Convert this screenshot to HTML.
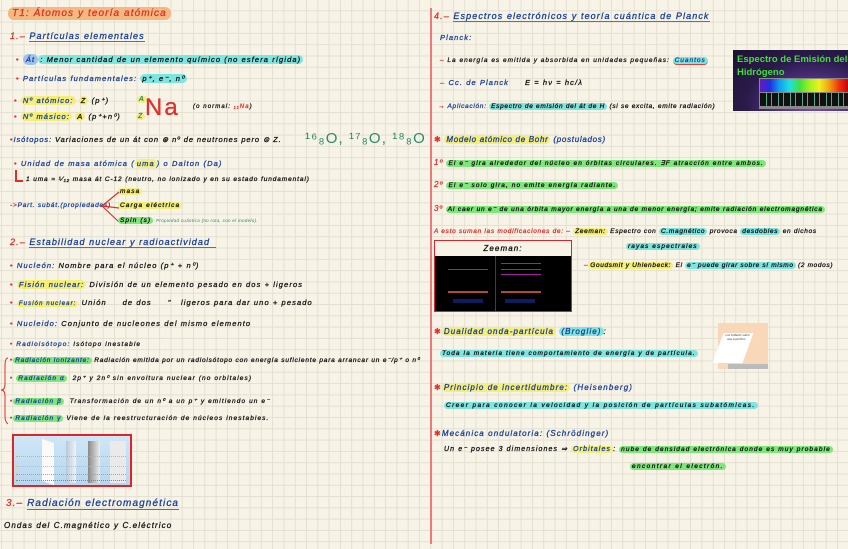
<!DOCTYPE html>
<html><head><meta charset="utf-8"><style>
html,body{margin:0;padding:0}
body{width:848px;height:549px;position:relative;overflow:hidden;background-color:#f7f4e7;
background-image:linear-gradient(to right,#e3e0d1 1px,transparent 1px),linear-gradient(to bottom,#e3e0d1 1px,transparent 1px);
background-size:11.3px 11.3px;background-position:1px -1px;
font-family:"Liberation Sans",sans-serif;font-style:italic;font-size:7.5px;color:#111;letter-spacing:1.1px;-webkit-text-stroke:0.3px currentColor}
.t{position:absolute;white-space:nowrap;line-height:10px}
.b{color:#1a3f99}.r{color:#e0302a}.g{color:#2a8a6a}.k{color:#111}
.hc{background:#7ee6e0;border-radius:5px;padding:0 2px}
.hy{background:#f4ee7a;border-radius:5px;padding:0 2px}
.hg{background:#7ee67a;border-radius:5px;padding:0 2px}
.ho{background:#f5b880;border-radius:6px;padding:1px 4px}
.u{border-bottom:1.5px solid #e0403a}
.dot{color:#e0302a;font-style:normal}
</style></head><body>
<div style="position:absolute;left:430px;top:8px;width:1.5px;height:536px;background:#ec7a7a"></div>

<!-- LEFT -->
<div class="t r" style="left:8px;top:9px;font-size:10px"><span class="ho">T1: Átomos y teoría atómica</span></div>
<div class="t r" style="left:10px;top:31px;font-size:9px">1.– <span class="b u">Partículas elementales</span></div>
<div class="t" style="left:16px;top:55px"><span class="dot">•</span> <span style="background:#9fc2ec;border-radius:6px;padding:1px 3px" class="b">Át</span><span class="hc">: Menor cantidad de un elemento químico (no esfera rígida)</span></div>
<div class="t b" style="left:16px;top:74px"><span class="dot">•</span> Partículas fundamentales: <span class="hc k">p⁺, e⁻, n⁰</span></div>
<div class="t" style="left:14px;top:96px"><span class="dot">•</span> <span class="hy b">Nº atómico:</span> <span class="hy">Z</span> (p⁺)</div>
<div class="t" style="left:14px;top:112px"><span class="dot">•</span> <span class="hy b">Nº másico:</span> <span class="hy">A</span> (p⁺+n⁰)</div>
<div class="t g" style="left:137px;top:95px;font-size:7px"><span class="hy">A</span></div>
<div class="t g" style="left:136px;top:112px;font-size:7px"><span class="hy">Z</span></div>
<div class="t r" style="left:145px;top:96px;font-size:24px;font-style:normal;line-height:24px;letter-spacing:2px">Na</div>
<div class="t k" style="left:193px;top:102px;font-size:6px">(o normal: <span class="r">₁₁Na</span>)</div>
<div class="t k" style="left:10px;top:135px;letter-spacing:0.9px"><span class="dot">•</span><span class="b">Isótopos:</span> Variaciones de un át con ⊛ nº de neutrones pero ⊜ Z.</div>
<div class="t g" style="left:305px;top:131px;font-size:15px;line-height:16px;font-style:normal;-webkit-text-stroke:0">¹⁶₈O, ¹⁷₈O, ¹⁸₈O</div>
<div class="t b" style="left:14px;top:159px"><span class="dot">•</span> Unidad de masa atómica (<span class="hy">uma</span>) o Dalton (Da)</div>
<div style="position:absolute;left:15px;top:170px;width:1.5px;height:10px;background:#e0302a"></div>
<div style="position:absolute;left:15px;top:180px;width:8px;height:1.5px;background:#e0302a"></div>
<div class="t k" style="left:26px;top:175px;font-size:6.5px;letter-spacing:0.9px">1 uma = ¹⁄₁₂ masa át C-12 (neutro, no ionizado y en su estado fundamental)</div>
<div class="t k" style="left:118px;top:187px;font-size:6.5px"><span class="hy">masa</span></div>
<div class="t" style="left:10px;top:201px;font-size:6.5px;letter-spacing:0.8px"><span class="r">-&gt;</span><span class="b">Part. subát.(propiedades)</span></div>
<svg style="position:absolute;left:99px;top:190px" width="22" height="36"><path d="M20 2 L3 16 L20 18 M3 16 L20 32" stroke="#e0302a" stroke-width="1.2" fill="none"/></svg>
<div class="t k" style="left:118px;top:201px;font-size:6.5px"><span class="hy">Carga eléctrica</span></div>
<div class="t k" style="left:118px;top:216px;font-size:6.5px"><span class="hg">Spin (s)</span> <span class="g" style="font-size:4.5px;letter-spacing:.3px;-webkit-text-stroke:0">Propiedad cuántica (no rota, con el modelo).</span></div>
<div class="t r" style="left:10px;top:237px;font-size:9px">2.– <span class="b u" style="padding-right:6px">Estabilidad nuclear y radioactividad</span></div>
<div class="t k" style="left:10px;top:261px"><span class="dot">•</span> <span class="b">Nucleón:</span> Nombre para el núcleo (p⁺ + n⁰)</div>
<div class="t k" style="left:10px;top:280px"><span class="dot">•</span> <span class="hy b">Fisión nuclear:</span> División de un elemento pesado en dos + ligeros</div>
<div class="t k" style="left:10px;top:298px"><span class="dot">•</span> <span class="hy b" style="font-size:6px">Fusión nuclear:</span> Unión &nbsp; &nbsp; de dos &nbsp; &nbsp; " &nbsp; ligeros para dar uno + pesado</div>
<div class="t k" style="left:10px;top:319px"><span class="dot">•</span> <span class="b">Nucleido:</span> Conjunto de nucleones del mismo elemento</div>
<div class="t k" style="left:10px;top:340px;font-size:6.5px"><span class="dot">•</span> <span class="b">Radioisótopo:</span> Isótopo inestable</div>
<svg style="position:absolute;left:0px;top:356px" width="12" height="70"><path d="M8 2 Q5 2 5 10 L5 28 Q5 34 1 34 Q5 34 5 40 L5 60 Q5 66 8 68" stroke="#e0302a" stroke-width="1" fill="none"/></svg>
<div class="t k" style="left:10px;top:356px;font-size:6.5px;letter-spacing:0.8px"><span class="dot">•</span><span class="hg b">Radiación ionizante:</span> Radiación emitida por un radioisótopo con energía suficiente para arrancar un e⁻/p⁺ o n⁰</div>
<div class="t k" style="left:10px;top:374px;font-size:6.5px"><span class="dot">•</span> <span class="hg b">Radiación α</span> &nbsp;2p⁺ y 2n⁰ sin envoltura nuclear (no orbitales)</div>
<div class="t k" style="left:10px;top:397px;font-size:6.5px"><span class="dot">•</span><span class="hg b">Radiación β</span> &nbsp;Transformación de un n⁰ a un p⁺ y emitiendo un e⁻</div>
<div class="t k" style="left:10px;top:414px;font-size:6.5px"><span class="dot">•</span><span class="hg b">Radiación γ</span> Viene de la reestructuración de núcleos inestables.</div>
<div style="position:absolute;left:12px;top:434px;width:116px;height:49px;border:2px solid #d8262a;background:linear-gradient(#cfe6f6,#b8d6ee)">
  <div style="position:absolute;left:28px;top:5px;width:12px;height:42px;background:#fafafa;transform:skewY(20deg)"></div>
  <div style="position:absolute;left:52px;top:5px;width:10px;height:42px;background:linear-gradient(90deg,#b8c8d8,#f0f4f8)"></div>
  <div style="position:absolute;left:74px;top:5px;width:12px;height:42px;background:linear-gradient(90deg,#888,#eee)"></div>
  <div style="position:absolute;left:96px;top:5px;width:16px;height:42px;background:#eaeaea"></div>
  <div style="position:absolute;left:2px;top:20px;width:110px;height:1px;border-top:1px dotted #d8b060"></div>
  <div style="position:absolute;left:2px;top:30px;width:110px;height:1px;border-top:1px dotted #e8c040"></div>
  <div style="position:absolute;left:2px;top:38px;width:110px;height:1px;border-top:1px dotted #e89040"></div>
  <div style="position:absolute;left:2px;top:44px;width:110px;height:1px;border-top:1px dotted #60a060"></div>
</div>
<div class="t r" style="left:6px;top:499px;font-size:10px">3.– <span class="b u">Radiación electromagnética</span></div>
<div class="t k" style="left:4px;top:521px;font-size:8px">Ondas del C.magnético y C.eléctrico</div>

<!-- RIGHT -->
<div class="t r" style="left:434px;top:11px;font-size:9px">4.– <span class="b u">Espectros electrónicos y teoría cuántica de Planck</span></div>
<div class="t b" style="left:440px;top:33px">Planck:</div>
<div class="t k" style="left:440px;top:56px;font-size:6.5px;letter-spacing:1px"><span class="r">–</span> La energía es emitida y absorbida en unidades pequeñas: <span class="hc b u">Cuantos</span></div>
<div class="t b" style="left:440px;top:78px"><span class="r">–</span> Cc. de Planck &nbsp; &nbsp; <span class="k">E = hν = hc/λ</span></div>
<div class="t k" style="left:438px;top:102px;font-size:6.5px;letter-spacing:0.7px"><span class="r">→</span> <span class="b">Aplicación:</span> <span class="hc">Espectro de emisión del át de H</span> (si se excita, emite radiación)</div>
<div style="position:absolute;left:733px;top:50px;width:115px;height:61px;background:radial-gradient(ellipse at 70% 90%,#7a4ac0,#2a1a4a 60%,#1c1230);overflow:hidden;-webkit-text-stroke:0">
  <div style="position:absolute;left:4px;top:3px;color:#3fe03a;font-style:normal;font-weight:bold;font-size:9.5px;letter-spacing:0;line-height:13px;white-space:nowrap">Espectro de Emisión del<br>Hidrógeno</div>
  <div style="position:absolute;left:26px;top:28px;width:89px;height:29px;background:#888;padding:1px">
    <div style="height:13px;background:linear-gradient(90deg,#6a18c0,#2030e0,#10a0f0,#20e0e0,#40e040,#a0f020,#f0f020,#f0a010,#f03010,#c00010)"></div>
    <div style="height:13px;margin-top:1px;background:#111 repeating-linear-gradient(90deg,transparent 0 6px,#5a8 6px 7px,transparent 7px 11px,#a84 11px 12px)"></div>
  </div>
</div>
<div class="t k" style="left:434px;top:135px;font-size:8px;letter-spacing:0.7px"><span class="r" style="font-style:normal">✱</span> <span class="hy b">Modelo atómico de Bohr</span> <span class="b">(postulados)</span></div>
<div class="t k" style="left:434px;top:158px;font-size:6.5px;letter-spacing:1.1px"><span class="r" style="font-size:8px">1º</span> <span class="hg">El e⁻ gira alrededor del núcleo en órbitas circulares. ∃F atracción entre ambos.</span></div>
<div class="t k" style="left:434px;top:180px;font-size:6.5px"><span class="r" style="font-size:8px">2º</span> <span class="hg">El e⁻ solo gira, no emite energía radiante.</span></div>
<div class="t k" style="left:434px;top:204px;font-size:6.5px;letter-spacing:0.85px"><span class="r" style="font-size:8px">3º</span> <span class="hg">Al caer un e⁻ de una órbita mayor energía a una de menor energía; emite radiación electromagnética</span></div>
<div class="t k" style="left:434px;top:227px;font-size:6.5px;letter-spacing:0.7px"><span class="r">A esto suman las modificaciones de: –</span> <span class="hy">Zeeman:</span> Espectro con <span class="hc">C.magnético</span> provoca <span class="hc">desdobles</span> en dichos</div>
<div class="t k" style="left:626px;top:242px;font-size:6.5px"><span class="hc">rayas espectrales</span></div>
<div class="t k" style="left:584px;top:261px;font-size:6.5px;letter-spacing:0.65px"><span class="r">–</span><span class="hy">Goudsmit y Uhlenbeck:</span> El <span class="hc">e⁻ puede girar sobre sí mismo</span> (2 modos)</div>
<div style="position:absolute;left:434px;top:240px;width:136px;height:70px;border:1.5px solid #d8262a;background:#000">
  <div style="height:15px;background:#f7f4e7;text-align:center;font-size:8px;line-height:15px">Zeeman:</div>
  <div style="position:absolute;left:60px;top:15px;width:1px;height:55px;background:#2030e0"></div>
  <div style="position:absolute;left:13px;top:28px;width:40px;height:1px;background:#a020a0"></div>
  <div style="position:absolute;left:66px;top:22px;width:40px;height:1px;background:#a020a0"></div>
  <div style="position:absolute;left:66px;top:28px;width:40px;height:1px;background:#a020a0"></div>
  <div style="position:absolute;left:66px;top:33px;width:40px;height:1px;background:#a020a0"></div>
  <div style="position:absolute;left:13px;top:50px;width:40px;height:1.5px;background:#b05020"></div>
  <div style="position:absolute;left:66px;top:50px;width:40px;height:1.5px;background:#b05020"></div>
  <div style="position:absolute;left:18px;top:58px;width:30px;height:4px;background:#1830a0;opacity:.6"></div>
  <div style="position:absolute;left:70px;top:58px;width:30px;height:4px;background:#1830a0;opacity:.6"></div>
</div>
<div class="t k" style="left:434px;top:327px;font-size:8px"><span class="r" style="font-style:normal">✱</span><span class="hy b">Dualidad onda-partícula</span> <span class="hc b">(Broglie)</span>:</div>
<div class="t k" style="left:440px;top:349px;font-size:6.5px;letter-spacing:1.1px"><span class="hc">Toda la materia tiene comportamiento de energía y de partícula.</span></div>
<div style="position:absolute;left:718px;top:323px;width:50px;height:46px;background:#f8d8b8">
  <div style="position:absolute;left:0;top:10px;width:30px;height:30px;background:#fff;transform:skewX(-20deg);font-size:3px;font-style:normal;letter-spacing:0;color:#444;text-align:center;line-height:4px;-webkit-text-stroke:0">Luz brillante sobre una superficie</div>
  <div style="position:absolute;left:10px;top:41px;width:40px;height:5px;background:#bbb"></div>
</div>
<div class="t k" style="left:434px;top:383px;font-size:8px"><span class="r" style="font-style:normal">✱</span><span class="hy b">Principio de incertidumbre:</span> <span class="b">(Heisenberg)</span></div>
<div class="t k" style="left:444px;top:401px;font-size:6.5px;letter-spacing:1.4px"><span class="hc">Creer para conocer la velocidad y la posición de partículas subatómicas.</span></div>
<div class="t k" style="left:434px;top:429px;font-size:8px"><span class="r" style="font-style:normal">✱</span><span class="b">Mecánica ondulatoria: (Schrödinger)</span></div>
<div class="t k" style="left:444px;top:445px;font-size:7px;letter-spacing:1.1px">Un e⁻ posee 3 dimensiones ⇒ <span class="hy b">Orbitales</span>: <span class="hg" style="font-size:6.5px">nube de densidad electrónica donde es muy probable</span></div>
<div class="t k" style="left:630px;top:462px;font-size:6.5px;letter-spacing:1.4px"><span class="hg">encontrar el electrón.</span></div>
</body></html>
